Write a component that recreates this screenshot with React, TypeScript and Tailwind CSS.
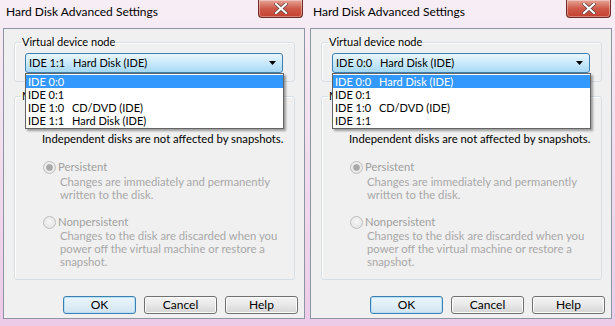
import React from "react";

const F = "font-['Lato','Noto_Sans',sans-serif]";

function CloseButton() {
  return (
    <div className="h-[18px] w-[45px] rounded-b-[4px] border border-t-0 border-[#6b2a24] bg-gradient-to-b from-[#e6a596] via-[#cf5a4a] to-[#c34030] flex items-center justify-center shadow-[inset_0_0_0_1px_rgba(255,255,255,0.35)]">
      <svg width="14" height="11" viewBox="0 0 14 11">
        <path d="M2 1 L12 10 M12 1 L2 10" stroke="#5a3a38" strokeWidth="3.6" strokeLinecap="square" />
        <path d="M2 1 L12 10 M12 1 L2 10" stroke="#ffffff" strokeWidth="2.2" strokeLinecap="square" />
      </svg>
    </div>
  );
}

function Radio({ checked }: { checked?: boolean }) {
  return (
    <svg width="13" height="13" viewBox="0 0 13 13" className="shrink-0">
      <defs>
        <radialGradient id="rg" cx="0.5" cy="0.4" r="0.6">
          <stop offset="0" stopColor="#f7f7f7" />
          <stop offset="1" stopColor="#e2e2e2" />
        </radialGradient>
      </defs>
      <circle cx="6.5" cy="6.5" r="6" fill="url(#rg)" stroke="#bdbdbd" />
      <circle cx="6.5" cy="6.5" r="4.5" fill="none" stroke="#ececec" />
      {checked && <circle cx="6.5" cy="6.5" r="3" fill="#a9a9a9" stroke="#9a9a9a" strokeWidth="0.6" />}
    </svg>
  );
}

function Button({ label, def }: { label: string; def?: boolean }) {
  return (
    <div
      className={
        "w-[73px] h-[18px] rounded-[3px] border flex items-center justify-center text-[12px] leading-[14px] text-black " +
        (def
          ? "border-[#3c7fb1] bg-gradient-to-b from-[#eaf6fd] via-[#e0eef7] to-[#cfe4f1] shadow-[inset_0_0_0_1px_#b6e0f7]"
          : "border-[#707070] bg-gradient-to-b from-[#f4f4f4] via-[#e8e8e8] to-[#d4d4d4] shadow-[inset_0_0_0_1px_#fbfbfb]")
      }
    >
      {label}
    </div>
  );
}

type Item = [string, string];

function Dialog({
  combo,
  items,
  wClass,
  mrClass,
}: {
  combo: Item;
  items: Item[];
  wClass: string;
  mrClass: string;
}) {
  return (
    <div className={"flex flex-col h-[326px] bg-gradient-to-b from-[#f7eef5] via-[#f1dcee] to-[#eccbe8] " + wClass}>
      <div className="h-[28px] shrink-0 flex items-start justify-between pl-[6px] pr-[4px]">
        <div className="pt-[4px] text-[12px] leading-[16px] text-black">Hard Disk Advanced Settings</div>
        <CloseButton />
      </div>
      <div className={"ml-[3px] h-[291px] shrink-0 border border-[#8e95a2] bg-[#f0f0f0] flex flex-col pl-[10px] " + mrClass}>
        {/* Virtual device node */}
        <fieldset className="mt-[6px] w-[281px] rounded-[3px] border border-[#d5dfe5] shadow-[inset_1px_1px_0_#fff] pb-[8px]">
          <legend className="ml-[6px] px-[1px] text-[11px] leading-[14px] text-black">Virtual device node</legend>
          <div className="relative mt-[4px] ml-[10px] w-[258px] h-[20px]">
            <div className="h-[20px] rounded-[3px] border border-[#3c7fb1] bg-gradient-to-b from-[#eaf6fd] via-[#c9e9fb] to-[#a7d9f5] flex items-center pl-[3px] text-[11px] leading-[14px] text-black">
              <span className="w-[44px] shrink-0">{combo[0]}</span>
              <span>{combo[1]}</span>
              <svg width="8" height="5" viewBox="0 0 8 5" className="ml-auto mr-[5px]">
                <path d="M0 0 H7 L3.5 4 Z" fill="#000" />
              </svg>
            </div>
            <div className="absolute left-0 top-[20px] z-10 w-[259px] border border-[#646464] bg-white py-[1px] shadow-[2px_2px_2px_rgba(0,0,0,0.35)]">
              {items.map((it, i) => (
                <div
                  key={i}
                  className={
                    "h-[13px] flex items-center pl-[2px] text-[11px] leading-[13px] " +
                    (i === 0 ? "bg-[#3399ff] text-white" : "text-black")
                  }
                >
                  <span className="w-[44px] shrink-0">{it[0]}</span>
                  <span>{it[1]}</span>
                </div>
              ))}
            </div>
          </div>
        </fieldset>

        {/* Mode */}
        <fieldset className="mt-[7px] w-[281px] rounded-[3px] border border-[#d5dfe5] shadow-[inset_1px_1px_0_#fff] pb-[11px] text-[11.3px]">
          <legend className="ml-[6px] px-[1px] leading-[14px] text-black">Mode</legend>
          <div className="mt-[4px] h-[14px] pl-[12px] flex items-center gap-[4px] leading-[14px] text-black">
            <span className="w-[13px] h-[13px] border border-[#8e8f8f] bg-white" />
            <span>Independent</span>
          </div>
          <div className="mt-[11px] pl-[27px] leading-[14px] text-black whitespace-nowrap">
            Independent disks are not affected by snapshots.
          </div>
          <div className="mt-[14px] pl-[28px] h-[14px] flex items-center gap-[2px] leading-[14px] text-[#a0a0a0]">
            <Radio checked />
            <span>Persistent</span>
          </div>
          <div className="mt-[1px] pl-[45px] leading-[13px] text-[#a8a8a8] whitespace-nowrap">
            <div>Changes are immediately and permanently</div>
            <div>written to the disk.</div>
          </div>
          <div className="mt-[14px] pl-[28px] h-[14px] flex items-center gap-[2px] leading-[14px] text-[#a0a0a0]">
            <Radio />
            <span>Nonpersistent</span>
          </div>
          <div className="mt-0 pl-[45px] leading-[13px] text-[#a8a8a8] whitespace-nowrap">
            <div>Changes to the disk are discarded when you</div>
            <div>power off the virtual machine or restore a</div>
            <div>snapshot.</div>
          </div>
        </fieldset>

        <div className="mt-[16px] ml-[49px] flex gap-[8px]">
          <Button label="OK" def />
          <Button label="Cancel" />
          <Button label="Help" />
        </div>
      </div>
    </div>
  );
}

export default function App() {
  return (
    <div className={"w-[615px] h-[326px] flex overflow-hidden " + F}>
      <Dialog
        wClass="w-[307px]"
        mrClass="mr-[2px]"
        combo={["IDE 1:1", "Hard Disk (IDE)"]}
        items={[
          ["IDE 0:0", ""],
          ["IDE 0:1", ""],
          ["IDE 1:0", "CD/DVD (IDE)"],
          ["IDE 1:1", "Hard Disk (IDE)"],
        ]}
      />
      <Dialog
        wClass="w-[308px]"
        mrClass="mr-[3px]"
        combo={["IDE 0:0", "Hard Disk (IDE)"]}
        items={[
          ["IDE 0:0", "Hard Disk (IDE)"],
          ["IDE 0:1", ""],
          ["IDE 1:0", "CD/DVD (IDE)"],
          ["IDE 1:1", ""],
        ]}
      />
    </div>
  );
}
